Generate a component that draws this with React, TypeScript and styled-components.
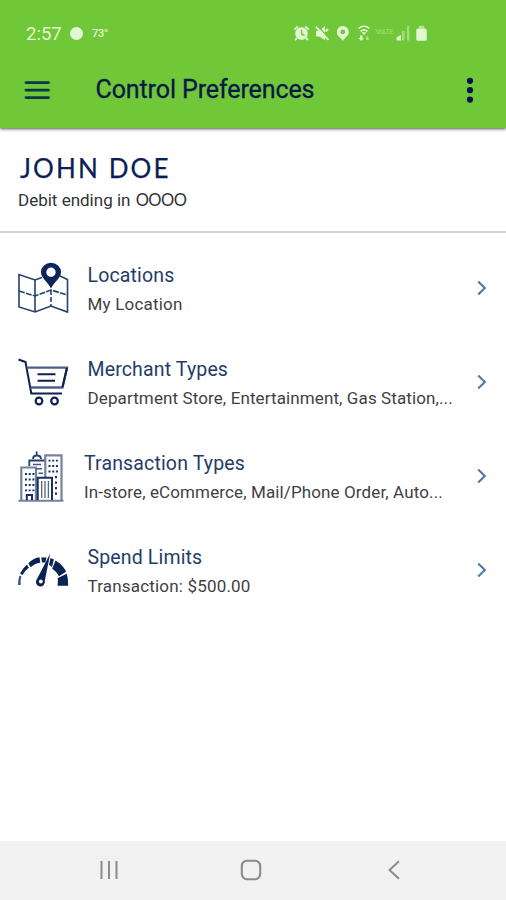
import React from "react";
import styled, { createGlobalStyle } from "styled-components";

const GlobalStyle = createGlobalStyle`
  *, *::before, *::after { box-sizing: border-box; }
  body { margin: 0; background: #fff; font-family: Roboto, "Liberation Sans", sans-serif; }
  svg { display: block; flex: none; }
`;

const navy = "#0b1f56";
const mist = "#e2f8d4";

const Screen = styled.div`
  display: flex;
  flex-direction: column;
  width: 506px;
  height: 900px;
  overflow: hidden;
  background: #fff;
`;

const Header = styled.header`
  flex: none;
  height: 128px;
  background: #70c738;
  box-shadow: 0 1px 3px rgba(30, 20, 40, 0.75);
`;

const StatusBar = styled.div`
  display: flex;
  align-items: center;
  height: 54px;
  padding: 13px 76px 0 26px;
  color: ${mist};
`;

const Clock = styled.span`
  width: 44px;
  font-size: 18.5px;
  line-height: 22px;
  white-space: nowrap;
`;

const WeatherDot = styled.span`
  width: 13px;
  height: 13px;
  border-radius: 50%;
  background: ${mist};
`;

const Temperature = styled.span`
  margin-left: 9px;
  font-size: 11px;
  font-weight: 500;
  letter-spacing: -0.3px;
`;

const StatusIcons = styled.svg`
  margin-left: auto;
`;

const TitleBar = styled.div`
  display: flex;
  align-items: center;
  height: 72px;
  padding: 0 30px 0 24px;
`;

const Title = styled.h1`
  flex: 1;
  margin: -1px 0 0 44.5px;
  font-size: 25px;
  font-weight: 400;
  line-height: 30px;
  letter-spacing: -0.1px;
  white-space: nowrap;
  color: #061848;
  -webkit-text-stroke: 0.3px #061848;
`;

const Account = styled.section`
  flex: none;
  height: 105px;
  padding: 24px 18px 0;
  border-bottom: 2px solid #d5d5d7;
`;

const Holder = styled.h2`
  margin: 0 0 0 2px;
  font-family: Lato, sans-serif;
  font-size: 26px;
  font-weight: 400;
  line-height: 32px;
  letter-spacing: 2.1px;
  color: ${navy};
  -webkit-text-stroke: 0.25px ${navy};
`;

const Card = styled.p`
  margin: 5px 0 0;
  font-size: 17px;
  line-height: 22px;
  color: #333338;
`;

const CardDigits = styled.span`
  margin-left: 1.5px;
  font-family: Lato, sans-serif;
  font-size: 16.5px;
  letter-spacing: -0.5px;
`;

const List = styled.main`
  flex: 1;
  padding-top: 8px;
`;

const Row = styled.div`
  display: flex;
  align-items: center;
  height: 94px;
  padding: 0 18px 0 14px;
`;

const RowText = styled.div<{ $inset: number }>`
  flex: 1;
  min-width: 0;
  padding-left: ${(p) => p.$inset}px;
  white-space: nowrap;
`;

const RowTitle = styled.div`
  padding-top: 1px;
  font-size: 19.5px;
  line-height: 28px;
  letter-spacing: 0.15px;
  color: #233c68;
`;

const RowDetail = styled.div<{ $spacing: number }>`
  font-size: 17px;
  line-height: 24px;
  margin-top: 2px;
  letter-spacing: ${(p) => p.$spacing}px;
  color: #3f3f44;
`;

const NavBar = styled.nav`
  display: flex;
  flex: none;
  align-items: center;
  height: 59px;
  padding: 0 0 1px 98px;
  background: #f1f1f1;
`;

const HomeButton = styled.svg`
  margin-left: 120px;
`;

const BackButton = styled.svg`
  margin-left: 125px;
`;

const MapIcon = () => (
  <svg width="60" height="60" viewBox="14 258 60 60" fill="none" stroke="#22416e" strokeWidth="1.6">
    <path d="M42 277.5 L35 280 L19 274.5 V307 L35 312 L51 306 L67.5 312 V279.5 L60 276 M35 280 V312" />
    <path d="M19 291 L35 296 L51 290 L67.5 295" strokeDasharray="6 1.2" />
    <path d="M51 290 V306" strokeDasharray="5 2" />
    <path
      d="M51 288.5 C47.5 281.5 41 278 41 272 A10 9.3 0 0 1 61 272 C61 278 54.5 281.5 51 288.5 Z M51 267.5 A4.7 4.7 0 1 0 51 276.9 A4.7 4.7 0 1 0 51 267.5 Z"
      fill="#0c245c"
      fillRule="evenodd"
      stroke="none"
    />
  </svg>
);

const CartIcon = () => (
  <svg width="60" height="60" viewBox="14 352 60 60" fill="none" stroke="#0d214e" strokeWidth="2">
    <path d="M18.5 359.5 L25.5 362 L31.3 393.5 H62" />
    <path d="M26.8 367.7 H67 L62.5 387.5 H30.5" stroke="#4d5f86" strokeWidth="2.3" />
    <path d="M67 368 L62.5 387" />
    <path d="M37.5 374.2 H55.5 M37.5 380.7 H55" strokeWidth="2.1" />
    <ellipse cx="39" cy="401" rx="3.3" ry="3.4" strokeWidth="2.2" />
    <ellipse cx="54.5" cy="401" rx="3.3" ry="3.4" strokeWidth="2.2" />
  </svg>
);

const BuildingsIcon = () => (
  <svg width="60" height="60" viewBox="14 446 60 60" fill="none" stroke="#72829f" strokeWidth="2.2">
    <path d="M18.5 500.7 H63.5" strokeWidth="2" />
    <path d="M21.3 500 V467.5 H36 V500 M45.3 478 V455.3 H61.5 V500" />
    <path d="M29.3 466 V460.5 H44.5" stroke="#28426f" strokeWidth="1.8" />
    <path d="M33 459 Q33 455.5 37 455.5 Q41 455.5 41 459 M36.7 455 V451.5" stroke="#28426f" strokeWidth="1.8" />
    <path d="M37.7 500 V477.7 H52 V500" stroke="#173160" strokeWidth="2" />
    <path d="M41.7 481 V498 M45 481 V498 M48.4 481 V498" stroke="#536587" strokeWidth="1.3" />
    <path
      d="M48.5 460.7 H58 M48.5 466 H58 M48.5 471.5 H58 M25 474 H34.5 M25 479.5 H34.5 M25 485 H34.5 M25 490.4 H34.5"
      stroke="#1a3260"
      strokeWidth="1.8"
      strokeDasharray="2 1.7"
    />
    <path d="M56 476 V498" stroke="#1a3260" strokeWidth="2" strokeDasharray="2.2 3.3" />
    <path d="M33 464.5 H41 M36.5 468.7 H42 M38.5 473.3 H43" stroke="#405b83" strokeWidth="1.4" />
    <path d="M26.8 500 V495 H32 V500" stroke="#173160" strokeWidth="2" />
  </svg>
);

const GaugeIcon = () => (
  <svg width="60" height="60" viewBox="14 540 60 60">
    <g fill="#0a2355">
      <path d="M18 585 Q18 580 19.5 575.5 L21.3 576.2 Q20.3 580 20.6 585 Z" opacity=".8" />
      <path d="M20 573.6 Q23 568 27 564.6 L28.8 567.8 Q25 570.5 22.6 575 Z" />
      <path d="M28.3 563.2 Q34 557.8 39.5 557.3 L40.3 562.5 Q35 563.3 30.6 567.3 Z" />
      <path d="M41.3 557.4 L46.5 557.6 L45.4 562.6 L42 562.4 Z M50.5 558 L53.9 559.6 L52 566.9 L49 564.8 Z" />
      <path d="M55.5 560.5 Q62.5 564.5 66.2 571.6 L59 576.2 Q56.5 571.5 52.2 568.8 Z" />
      <path d="M66.8 573.8 Q68.3 579 68.2 585.8 H57.6 Q58 581 57.8 578 Z" />
      <path d="M50.2 553.4 L44.8 581 A4.5 4.5 0 1 1 37 579 Z" />
    </g>
    <circle cx="40.8" cy="581.5" r="1.9" fill="#fff" />
  </svg>
);

const Chevron = () => (
  <svg width="12" height="16" viewBox="0 0 12 16" fill="none" stroke="#5379a0" strokeWidth="2.1">
    <path d="M2.2 1.4 L8.8 8 L2.2 14.6" />
  </svg>
);

const rows = [
  { icon: MapIcon, title: "Locations", detail: "My Location", inset: 13.5, spacing: 0.2 },
  {
    icon: CartIcon,
    title: "Merchant Types",
    detail: "Department Store, Entertainment, Gas Station,...",
    inset: 13.5,
    spacing: 0.11,
  },
  {
    icon: BuildingsIcon,
    title: "Transaction Types",
    detail: "In-store, eCommerce, Mail/Phone Order, Auto...",
    inset: 10,
    spacing: 0.12,
  },
  { icon: GaugeIcon, title: "Spend Limits", detail: "Transaction: $500.00", inset: 13.5, spacing: 0.18 },
];

export default function App() {
  return (
    <>
      <GlobalStyle />
      <Screen>
        <Header>
          <StatusBar>
            <Clock>2:57</Clock>
            <WeatherDot />
            <Temperature>73°</Temperature>
            <StatusIcons width="138" height="20" viewBox="292 24 138 20" fill={mist}>
              <path
                d="M301.5 27.2 A6.3 6.3 0 1 0 301.5 39.8 A6.3 6.3 0 1 0 301.5 27.2 Z M300.8 29.7 H302.2 V33.3 L305 35 L304.3 36.2 L300.8 34.2 Z"
                fillRule="evenodd"
              />
              <path
                d="M294.3 29.5 L297.8 26.5 M308.7 29.5 L305.2 26.5 M297 38 L295 40 M306 38 L308 40"
                stroke={mist}
                strokeWidth="1.8"
              />
              <path d="M316 31 H319 L325 26 V40 L319 36.5 H316 Z" />
              <path d="M317.5 26 L330 39" stroke="#70c738" strokeWidth="1.2" />
              <path d="M316 27 L328.5 39.8 M325.5 31.5 L328 29" stroke={mist} strokeWidth="1.8" />
              <path
                d="M342.8 26 A6 6 0 0 0 336.8 32 C336.8 35.5 340.5 37.5 342.8 41 C345.1 37.5 348.8 35.5 348.8 32 A6 6 0 0 0 342.8 26 Z M342.8 29.5 A2.4 2.4 0 1 1 342.8 34.3 A2.4 2.4 0 1 1 342.8 29.5 Z"
                fillRule="evenodd"
              />
              <path
                d="M358.5 28.5 Q364 24 369.5 28.5 M360.5 31.3 Q364 28.5 367.5 31.3"
                stroke={mist}
                strokeWidth="1.6"
                fill="none"
              />
              <path d="M361.6 32.2 H366.4 L364 35 Z M360 35.5 H362.5 V38 H364 L361.2 41 L358.4 38 H360 Z" />
              <path d="M366 40 V37.5 L367.4 35.5 L368.8 37.5 V40 Z" opacity=".5" />
              <g opacity=".45">
                <text x="375.5" y="33.5" fontSize="7.5" fontFamily="Roboto, sans-serif" textLength="18">
                  VoLTE
                </text>
                <path d="M402 31 H404.5 V40.5 H402 Z M407 26 H409.3 V40.5 H407 Z" />
              </g>
              <path d="M396.5 37.5 L401 35 V40.5 H396.5 Z" />
              <path d="M418.5 29 V27.5 Q418.5 25.5 421.5 25.5 Q424.5 25.5 424.5 27.5 V29 Z" opacity=".6" />
              <rect x="416.3" y="28.7" width="10.4" height="12" rx="1.2" />
            </StatusIcons>
          </StatusBar>
          <TitleBar>
            <svg width="27" height="20" viewBox="0 0 27 20" stroke="#0b3849" strokeWidth="2.9" strokeLinecap="round">
              <path d="M2 2.6 H24.5 M2 10.1 H24.5 M2 17.6 H24.5" />
            </svg>
            <Title>Control Preferences</Title>
            <svg width="12" height="26" viewBox="0 0 12 26" fill="#04134f">
              <circle cx="6" cy="3.8" r="3.1" />
              <circle cx="6" cy="13.2" r="3.1" />
              <circle cx="6" cy="22.6" r="3.1" />
            </svg>
          </TitleBar>
        </Header>
        <Account>
          <Holder>JOHN DOE</Holder>
          <Card>
            Debit ending in<CardDigits> OOOO</CardDigits>
          </Card>
        </Account>
        <List>
          {rows.map(({ icon: Icon, title, detail, inset, spacing }) => (
            <Row key={title}>
              <Icon />
              <RowText $inset={inset}>
                <RowTitle>{title}</RowTitle>
                <RowDetail $spacing={spacing}>{detail}</RowDetail>
              </RowText>
              <Chevron />
            </Row>
          ))}
        </List>
        <NavBar>
          <svg width="22" height="20" viewBox="0 0 22 20" stroke="#8b8b8b" strokeWidth="2">
            <path d="M3.5 1 V19 M11 1 V19 M18.5 1 V19" />
          </svg>
          <HomeButton width="22" height="22" viewBox="0 0 22 22" fill="none" stroke="#8b8b8b" strokeWidth="2.1">
            <rect x="1.8" y="1.8" width="18.4" height="18.4" rx="5.2" />
          </HomeButton>
          <BackButton width="14" height="20" viewBox="0 0 14 20" fill="none" stroke="#8b8b8b" strokeWidth="2">
            <path d="M12 1.2 L2.5 10 L12 18.8" />
          </BackButton>
        </NavBar>
      </Screen>
    </>
  );
}
